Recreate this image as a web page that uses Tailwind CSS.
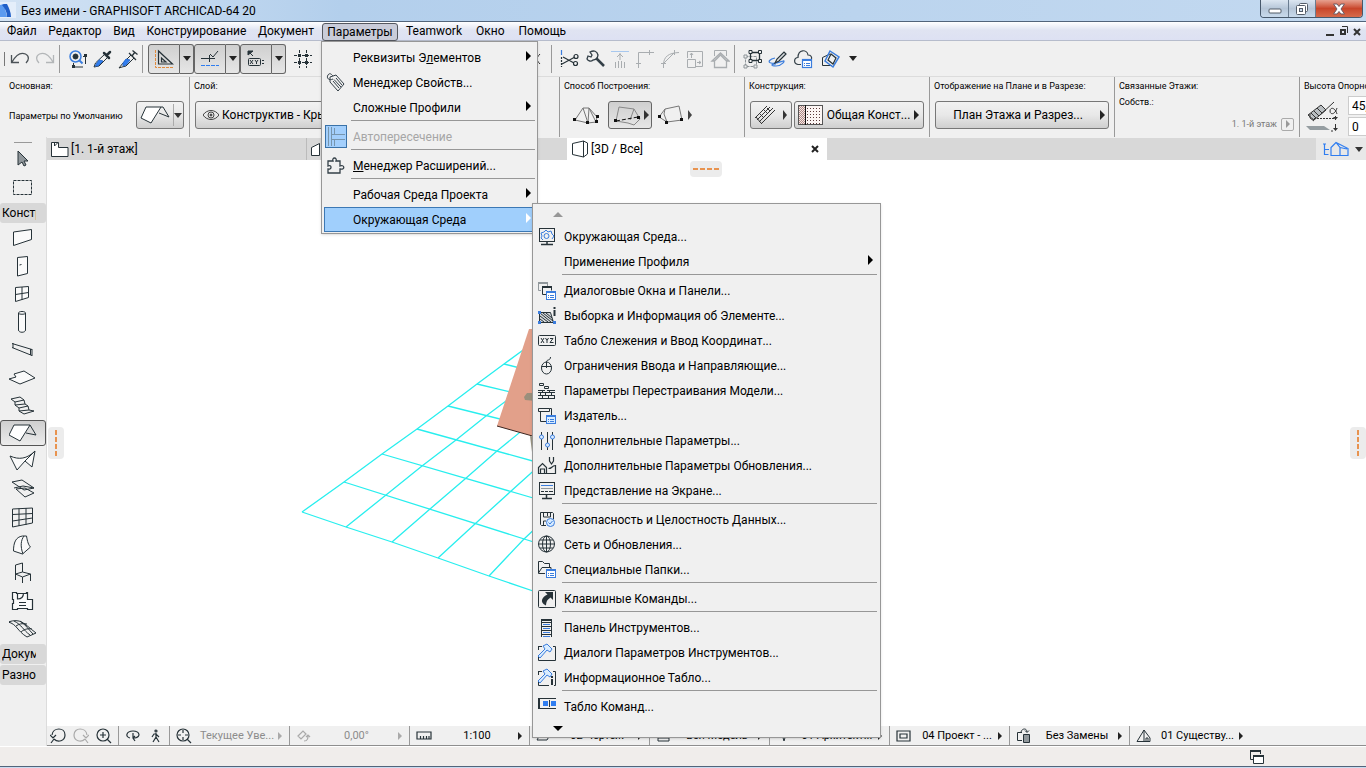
<!DOCTYPE html>
<html lang="ru">
<head>
<meta charset="utf-8">
<title>Без имени - GRAPHISOFT ARCHICAD-64 20</title>
<script src="https://cdn.jsdelivr.net/npm/@tailwindcss/browser@4"></script>
</head>
<body class="flex h-screen min-h-[600px] flex-col overflow-hidden bg-[#f0f0f0] font-['Roboto','Open_Sans',sans-serif] text-xs text-black">

<!-- Title bar -->
<header class="flex h-[22px] shrink-0 items-start border-b border-[#52647a] bg-linear-to-r from-[#d3e3f4] via-[#b3cfec] via-25% to-[#c3d9f0]">
  <svg width="16" height="18" viewBox="0 0 16 18" class="mt-[2px] shrink-0"><rect width="16" height="16" fill="#e4eefa"/><path d="M0 3l4-1 3 13H0z" fill="#5b9bf0"/><path d="M4 2h3c2 4 4 8 4 13H7C7 10 5 6 2 3z" fill="#1f5fc8"/></svg>
  <h1 class="ml-[5px] text-xs leading-[22px] whitespace-nowrap">Без имени - GRAPHISOFT ARCHICAD-64 20</h1>
  <div class="mr-[3px] ml-auto flex h-[18px] overflow-hidden rounded-b border border-t-0 border-[#47586b]">
    <button aria-label="Свернуть" class="flex w-7 items-center justify-center border-r border-[#6a7c90] bg-linear-to-b from-[#dce6f1] via-[#b6c6d8] to-[#c8daec]"><svg width="14" height="6" viewBox="0 0 14 6" class="mt-1"><rect x="1" y="1" width="12" height="4" rx="1" fill="#fff" stroke="#535c68"/></svg></button>
    <button aria-label="Восстановить" class="flex w-[27px] items-center justify-center border-r border-[#6a7c90] bg-linear-to-b from-[#dce6f1] via-[#b6c6d8] to-[#c8daec]"><svg width="14" height="14" viewBox="0 0 14 14" fill="#fff" stroke="#535c68"><rect x="4.500" y="1.500" width="8" height="8" rx="1"/><rect x="1.500" y="3.500" width="9" height="9" rx="1"/><rect x="4.500" y="6.500" width="3" height="3" fill="#c8daec"/></svg></button>
    <button aria-label="Закрыть" class="flex w-[46px] items-center justify-center bg-linear-to-b from-[#e6a08f] via-[#c8452a] to-[#d66a4a]"><svg width="14" height="12" viewBox="0 0 14 12"><path d="M1.500 1h3.500l2 2.500L9 1h3.500L9 6l3.500 5H9L7 8.500 5 11H1.500L5 6z" fill="#fff" stroke="#6d5a62"/></svg></button>
  </div>
</header>

<!-- Menu bar -->
<nav class="relative z-20 flex h-[19px] shrink-0 items-center border-b border-[#b6bccc] bg-linear-to-b from-white via-[#e0e4f2] via-45% to-[#dde1f3] leading-5 whitespace-nowrap">
  <div class="flex w-[322px] shrink-0 justify-between pr-2 pl-[7px]">
    <button>Файл</button>
    <button>Редактор</button>
    <button>Вид</button>
    <button>Конструирование</button>
    <button>Документ</button>
  </div>
  <div class="relative h-[18px] w-[76px] shrink-0">
    <button class="h-[18px] w-full rounded-[3px] border border-[#55585f] bg-[#c9ccd9] leading-[17px]" aria-expanded="true">Параметры</button>

    <!-- Options menu -->
    <div class="absolute top-[19px] -left-px w-[217px] border border-[#979797] bg-[#f0f0f0] px-[2px] pt-[3px] pb-px shadow-sm" role="menu">
      <button role="menuitem" class="flex h-[25px] w-full items-center pr-1"><span class="w-[29px]"></span>Реквизиты Э<u>л</u>ементов<svg width="5" height="10" viewBox="0 0 5 10" class="mb-1 ml-auto"><path d="M0 0l5 5-5 5z"/></svg></button>
      <button role="menuitem" class="flex h-[25px] w-full items-center"><span class="w-[29px]"><svg width="22" height="22" viewBox="0 0 22 22" class="ml-[2px]" fill="none" stroke="#333f47"><path d="M4 5l6-2 8 9-6 7-8-9zM7 9l6 7M8 7.500l7 7.500M10 6l6 7"/><path d="M7 7C3 9 0 6 2 3s4 0 5 1"/></svg></span>Менеджер Свойств...</button>
      <button role="menuitem" class="flex h-[25px] w-full items-center pr-1"><span class="w-[29px]"></span>Сложные Профили<svg width="5" height="10" viewBox="0 0 5 10" class="mb-1 ml-auto"><path d="M0 0l5 5-5 5z"/></svg></button>
      <hr class="mb-[3px] ml-[27px] border-[#979797]">
      <button role="menuitem" disabled class="flex h-[25px] w-full items-center text-[#a6a6a6]"><span class="w-[29px]"><svg width="22" height="23" viewBox="0 0 22 23" class="ml-px"><rect x=".5" y=".5" width="21" height="22" fill="#a3cffc" stroke="#3a72a8"/><path d="M3.500 2v19M6.500 2v19M6.500 9.500H20M6.500 14.500H20M9.500 3v6M9.500 15v6" fill="none" stroke="#7795ad"/></svg></span>Автопересечение</button>
      <hr class="mb-[3px] ml-[27px] border-[#979797]">
      <button role="menuitem" class="flex h-[25px] w-full items-center"><span class="w-[29px]"><svg width="20" height="20" viewBox="0 0 20 20" class="ml-[2px]" fill="none" stroke="#333f47" stroke-width="1.300"><path d="M2 5h5c-1.500-4 4.500-4 3 0h4v5c4-2 6 4 0 3v4H2v-4c4 1 4-5 0-3z"/></svg></span><u>М</u>енеджер Расширений...</button>
      <hr class="mb-[3px] ml-[27px] border-[#979797]">
      <button role="menuitem" class="flex h-[25px] w-full items-center pr-1"><span class="w-[29px]"></span>Рабочая Среда Проекта<svg width="5" height="10" viewBox="0 0 5 10" class="mb-1 ml-auto"><path d="M0 0l5 5-5 5z"/></svg></button>
      <button role="menuitem" aria-expanded="true" class="flex h-[25px] w-full items-center border border-[#3c78b4] bg-[#a0cffc] pr-[3px]"><span class="w-7"></span>Окружающая Среда<svg width="5" height="10" viewBox="0 0 5 10" class="mb-1 ml-auto"><path d="M0 0l5 5-5 5z" fill="#fff"/></svg></button>
    </div>

    <!-- Work Environment submenu -->
    <div class="absolute top-[181px] left-[210px] w-[349px] border border-[#979797] bg-[#f0f0f0] px-[3px] shadow-sm" role="menu">
      <div class="flex h-5 items-center pl-[17px]"><svg width="10" height="5" viewBox="0 0 10 5"><path d="M0 5l5-5 5 5z" fill="#979797"/></svg></div>
      <button role="menuitem" class="flex h-[25px] w-full items-center gap-[7px] pl-px"><svg width="20" height="20" viewBox="0 0 20 20" fill="none" stroke="#263238"><rect x="2.500" y="1.500" width="15" height="13"/><path d="M10 15v3M4 17.500h12" stroke-width="1.500"/><g stroke="#3b7ddd"><circle cx="9.500" cy="9" r="2.500"/><path d="M6 13l-2-2 1-2-1-3 3-1 2-2 2 2 3-1 1 3 2 2-2 3"/></g></svg>Окружающая Среда...</button>
      <button role="menuitem" class="flex h-[25px] w-full items-center gap-[7px] pr-1 pl-px"><span class="w-5"></span>Применение Профиля<svg width="5" height="10" viewBox="0 0 5 10" class="mb-1 ml-auto"><path d="M0 0l5 5-5 5z"/></svg></button>
      <hr class="mb-[3px] ml-[26px] border-[#979797]">
      <button role="menuitem" class="flex h-[25px] w-full items-center gap-[7px] pl-px"><svg width="20" height="20" viewBox="0 0 20 20" fill="none" stroke="#263238"><path d="M4 9.500H1.500v-7h9v3" stroke="#90979b"/><path d="M1 2h10" stroke="#90979b" stroke-width="2"/><path d="M9 13.500H5.500v-8h9v4"/><path d="M5 6h10" stroke-width="2"/><rect x="9.500" y="10.500" width="9" height="8" stroke="#3b7ddd" fill="#fff"/><path d="M9 11.500h10M11 14.500h1M13 14.500h4M11 16.500h1M13 16.500h4" stroke="#3b7ddd"/></svg>Диалоговые Окна и Панели...</button>
      <button role="menuitem" class="flex h-[25px] w-full items-center gap-[7px] pl-px"><svg width="20" height="20" viewBox="0 0 20 20" fill="none" stroke="#263238"><path d="M2.500 6.500h11l3 10h-14z" fill="#d5d8da"/><path d="M3 13l4 3M3 10l8 6M3 7l11 9M6 7l10 8M9 7l6 5"/><path d="M17.500 1v2M17.500 4v6" stroke-width="2"/><g fill="#3b7ddd" stroke="none"><path d="M1 5h3v3H1zM1 15h3v3H1zM16 15h3v3h-3z"/></g></svg>Выборка и Информация об Элементе...</button>
      <button role="menuitem" class="flex h-[25px] w-full items-center gap-[7px] pl-px"><svg width="20" height="20" viewBox="0 0 20 20" fill="none" stroke="#263238"><rect x="1.500" y="4.500" width="17" height="10" rx="1"/><path d="M4 7l3 5M7 7l-3 5M8.500 7L10 9.500 11.500 7M10 9.500V12M13 7.500h3l-3 4h3.500"/></svg>Табло Слежения и Ввод Координат...</button>
      <button role="menuitem" class="flex h-[25px] w-full items-center gap-[7px] pl-px"><svg width="20" height="20" viewBox="0 0 20 20" fill="none" stroke="#263238"><ellipse cx="9.500" cy="12" rx="5" ry="6"/><path d="M4.500 10.500h10M9.500 12V6c0-3 4-1 4-5"/></svg>Ограничения Ввода и Направляющие...</button>
      <button role="menuitem" class="flex h-[25px] w-full items-center gap-[7px] pl-px"><svg width="20" height="20" viewBox="0 0 20 20" fill="none" stroke="#263238"><path d="M2.500 2.500h4v2h-4zM7.500 5.500h4v2h-4zM1 9.500h7M10 9.500h8M1 11.500h17M1 14.500h17M1 17.500h17M5.500 9v2M12.500 9v2M3.500 12v2M8.500 12v2M14.500 12v2M5.500 15v2M11.500 15v2M17.500 15v2"/></svg>Параметры Перестраивания Модели...</button>
      <button role="menuitem" class="flex h-[25px] w-full items-center gap-[7px] pl-px"><svg width="20" height="20" viewBox="0 0 20 20" fill="none" stroke="#263238"><path d="M1.500 5.500v-3h11v3zM3.500 6v9.500H9M12.500 2.500h2v7"/><rect x="9.500" y="9.500" width="9" height="8" stroke="#3b7ddd" fill="#d8ecff"/><path d="M9 10.500h10M11 13.500h1M13 13.500h4M11 15.500h1M13 15.500h4" stroke="#3b7ddd"/></svg>Издатель...</button>
      <button role="menuitem" class="flex h-[25px] w-full items-center gap-[7px] pl-px"><svg width="20" height="20" viewBox="0 0 20 20" fill="none" stroke="#263238"><path d="M4.500 1v3M4.500 8v11M10.500 1v11M10.500 16v3M15.500 1v3M15.500 8v11"/><g stroke="#3b7ddd" fill="#d8ecff"><circle cx="4.500" cy="6" r="2"/><circle cx="10.500" cy="14" r="2"/><circle cx="15.500" cy="6" r="2"/></g></svg>Дополнительные Параметры...</button>
      <button role="menuitem" class="flex h-[25px] w-full items-center gap-[7px] pl-px"><svg width="20" height="20" viewBox="0 0 20 20" fill="none" stroke="#263238" stroke-width="1.200"><path d="M10 17.500h8.500v-8c-2 0-3 1-4 2s-2 1-3 1M1.500 17.500v-6l4-4 4 4v6zM3.500 17v-4h4v4M12.500 1v4l2 3 2-3V1"/></svg>Дополнительные Параметры Обновления...</button>
      <button role="menuitem" class="flex h-[25px] w-full items-center gap-[7px] pl-px"><svg width="20" height="20" viewBox="0 0 20 20" fill="none" stroke="#263238"><rect x="2.500" y="1.500" width="15" height="12"/><path d="M9.500 14v4M5 17.500h10" stroke-width="1.500"/><path d="M4 4.500h12" stroke="#3b7ddd"/><path d="M4 7.500h12" stroke="#90979b"/><path d="M4 10.500h3M8 10.500h3M12 10.500h4"/></svg>Представление на Экране...</button>
      <hr class="mb-[3px] ml-[26px] border-[#979797]">
      <button role="menuitem" class="flex h-[25px] w-full items-center gap-[7px] pl-px"><svg width="20" height="20" viewBox="0 0 20 20" fill="none" stroke="#263238"><path d="M9 15.500H4.500l-1-1v-12h12l1 1V9M6.500 3v4h7V3M10.500 3v3M6.500 15v-4H9"/><circle cx="13.500" cy="12.500" r="4" stroke="#3b7ddd" fill="#d8ecff"/><path d="M11.500 12.500l1.500 1.500 2.500-3" stroke="#3b7ddd"/></svg>Безопасность и Целостность Данных...</button>
      <button role="menuitem" class="flex h-[25px] w-full items-center gap-[7px] pl-px"><svg width="20" height="20" viewBox="0 0 20 20" fill="none" stroke="#263238"><circle cx="9.500" cy="9" r="8"/><ellipse cx="9.500" cy="9" rx="4" ry="8"/><path d="M9.500 1v16M1.500 9h16M3 5h13M3 13h13"/></svg>Сеть и Обновления...</button>
      <button role="menuitem" class="flex h-[25px] w-full items-center gap-[7px] pl-px"><svg width="20" height="20" viewBox="0 0 20 20" fill="none" stroke="#263238"><path d="M8 13.500H1.500v-12h4l2 2h5v4M1.500 13L5 7.500h9v2"/><rect x="9.500" y="9.500" width="9" height="8" stroke="#3b7ddd" fill="#fff"/><path d="M9 10.500h10M11 13.500h1M13 13.500h4M11 15.500h1M13 15.500h4" stroke="#3b7ddd"/></svg>Специальные Папки...</button>
      <hr class="mb-[3px] ml-[26px] border-[#979797]">
      <button role="menuitem" class="flex h-[25px] w-full items-center gap-[7px] pl-px"><svg width="20" height="20" viewBox="0 0 20 20" fill="none" stroke="#263238"><rect x="1.500" y="1.500" width="17" height="17" rx="1"/><path d="M8 3h8v8l-2.500-2.500C10 11 9.500 12 9 16.500 2 13 5 8 10.500 5.500z" fill="#263238" stroke="none"/></svg>Клавишные Команды...</button>
      <hr class="mb-[3px] ml-[26px] border-[#979797]">
      <button role="menuitem" class="flex h-[25px] w-full items-center gap-[7px] pl-px"><svg width="20" height="20" viewBox="0 0 20 20" fill="none" stroke="#263238"><path d="M4.500 19V1M14.500 19V1"/><path d="M4 2h11" stroke-width="2"/><path d="M5 4.500h9M5 8.500h9M5 12.500h9M5 16.500h9"/><path d="M6 6.500h7M6 10.500h7M6 14.500h7M6 18.500h7" stroke="#3b7ddd"/></svg>Панель Инструментов...</button>
      <button role="menuitem" class="flex h-[25px] w-full items-center gap-[7px] pl-px"><svg width="20" height="20" viewBox="0 0 20 20" fill="none" stroke="#263238"><path d="M1.500 4v3M1.500 14v3.500h17V3.500H16M1 3.500h4"/><path d="M3 15l-2-2 7-7-2-3 4-2 5 5-2 3-3-2z" fill="#d8ecff" stroke="#3b7ddd"/></svg>Диалоги Параметров Инструментов...</button>
      <button role="menuitem" class="flex h-[25px] w-full items-center gap-[7px] pl-px"><svg width="20" height="20" viewBox="0 0 20 20" fill="none" stroke="#263238"><path d="M1.500 4v3M1.500 14v3.500H12M17 17.500h1.500V3.500H16M1 3.500h4"/><path d="M3 15l-2-2 7-7-2-3 4-2 5 5-2 3-3-2z" fill="#d8ecff" stroke="#3b7ddd"/><path d="M15 8v2M15 11v6" stroke-width="2"/></svg>Информационное Табло...</button>
      <hr class="mb-[3px] ml-[26px] border-[#979797]">
      <button role="menuitem" class="flex h-[25px] w-full items-center gap-[7px] pl-px"><svg width="20" height="20" viewBox="0 0 20 20" fill="none" stroke="#263238"><path d="M1 1.500h18M1 11.500h18"/><path d="M2 1v11" stroke-width="2"/><path d="M6 4h5v5H6zM14 4h5v5h-5z" fill="#2f7df0" stroke="none"/><path d="M12.500 3v7"/></svg>Табло Команд...</button>
      <div class="flex h-[18px] items-center pl-[17px]"><svg width="10" height="5" viewBox="0 0 10 5"><path d="M0 0h10L5 5z"/></svg></div>
    </div>
  </div>
  <div class="flex gap-[14px] pl-2">
    <button>Teamwork</button>
    <button>Окно</button>
    <button>Помощь</button>
  </div>
  <svg width="36" height="12" viewBox="0 0 36 12" class="mr-[4px] ml-auto" fill="none" stroke="#333" stroke-width="2"><path d="M0 10h8M15 5h4v4h-4z"/><path d="M16 1.500h5.500V8" stroke-width="1"/><path d="M28 4l6 6M34 4l-6 6"/></svg>
</nav>

<!-- Main toolbar -->
<div class="flex h-9 shrink-0 items-center border-b border-[#dcdcdc]" role="toolbar">
  <div class="ml-1 h-[14px] w-[3px] border-l border-[#777]"></div>
  <button aria-label="Отменить" class="flex w-[25px] justify-center"><svg width="20" height="20" viewBox="0 0 20 20" fill="none" stroke="#4b5257" stroke-width="1.300"><path d="M1.500 6v7.500H9M2 13C6 6 11 3 15.500 5c4 2 3.500 6 .5 9"/></svg></button>
  <button aria-label="Повторить" class="flex w-[25px] justify-center"><svg width="20" height="20" viewBox="0 0 20 20" fill="none" stroke="#b3b6b8" stroke-width="1.300"><path d="M18.500 6v7.500H11M18 13C14 6 9 3 4.500 5c-4 2-3.500 6-.5 9"/></svg></button>
  <div class="mr-[5px] ml-[2px] h-7 border-l border-[#999]"></div>
  <button aria-label="Найти и выбрать" class="flex w-[25px] justify-center"><svg width="20" height="20" viewBox="0 0 20 20" fill="none" stroke="#263238"><circle cx="7.500" cy="7.500" r="5.500" stroke="#3b7ddd" stroke-width="1.500"/><circle cx="7.500" cy="7.500" r="2.500" fill="#263238"/><path d="M11.500 11.500l3 3" stroke="#3b7ddd" stroke-width="2"/><path d="M17.500 15V7M15 7.500h3M5.500 14v4H15M4 18h3"/><path d="M16 5h3v3h-3zM4 16h3v3H4z" fill="#263238" stroke="none"/></svg></button>
  <button aria-label="Взять параметры" class="flex w-[25px] justify-center"><svg width="20" height="20" viewBox="0 0 20 20" fill="none" stroke="#263238"><path d="M1 18l1.500-4L12 5l3 3-9 9z"/><path d="M2 17l4-6 4 1-5 5z" fill="#2f7df0" stroke="#2f6fd0"/><path d="M11 4l5 5M14 6l3-3" stroke-width="2.500" stroke-linecap="round"/></svg></button>
  <button aria-label="Передать параметры" class="flex w-[25px] justify-center"><svg width="20" height="20" viewBox="0 0 20 20" fill="none" stroke="#263238"><path d="M1 19l4-5 8-8 3 3-8 8-4 1z"/><path d="M5 14l3-4 4 1-4 5-3 1z" fill="#2f7df0" stroke="#2f6fd0"/><path d="M11 4l7 7M14 7l3-4M14.500 1.500l5 4" stroke-width="1.300"/></svg></button>
  <div class="mr-[5px] ml-[2px] h-7 border-l border-[#999]"></div>
  <div class="flex h-[30px]">
    <button aria-label="Направляющие" class="flex w-8 items-center justify-center rounded-l-[3px] border border-[#666] bg-linear-to-b from-[#cfcfcf] to-[#e6e6e6]"><svg width="20" height="20" viewBox="0 0 20 20" fill="none" stroke="#263238"><path d="M4.500 2v13h14zM7.500 9v4H12z" stroke-width="1.200"/><path d="M1.500 1v17.500H19" stroke="#e08a3c" stroke-dasharray="3 1"/></svg></button>
    <button aria-label="Параметры направляющих" class="flex w-[14px] items-center justify-center rounded-r-[3px] border border-l-0 border-[#666] bg-linear-to-b from-[#cfcfcf] to-[#e6e6e6]"><svg width="8" height="5" viewBox="0 0 8 5"><path d="M0 0h8L4 5z" fill="#222"/></svg></button>
    <button aria-label="Привязка" class="flex w-8 items-center justify-center rounded-l-[3px] border border-[#666] bg-linear-to-b from-[#cfcfcf] to-[#e6e6e6]"><svg width="20" height="20" viewBox="0 0 20 20" fill="none" stroke="#263238"><path d="M1 9.500h14M9.500 6v7M10 5l3 3 5-6"/><path d="M1 16.500h18" stroke="#2f7df0" stroke-dasharray="4 1"/></svg></button>
    <button aria-label="Параметры привязки" class="flex w-[14px] items-center justify-center rounded-r-[3px] border border-l-0 border-[#666] bg-linear-to-b from-[#cfcfcf] to-[#e6e6e6]"><svg width="8" height="5" viewBox="0 0 8 5"><path d="M0 0h8L4 5z" fill="#222"/></svg></button>
    <button aria-label="Табло слежения" class="flex w-8 items-center justify-center rounded-l-[3px] border border-[#666] bg-linear-to-b from-[#cfcfcf] to-[#e6e6e6]"><svg width="20" height="20" viewBox="0 0 20 20" fill="none" stroke="#263238"><path d="M2 2h5L2 6z" fill="#263238"/><path d="M4 4l3 3"/><rect x="2.500" y="9.500" width="12" height="7" rx="1"/><path d="M4 11l3 4M7 11l-3 4M9 11l1.500 2L12 11M10.500 13v2M16 11.500h2M16 14.500h2"/></svg></button>
    <button aria-label="Параметры табло слежения" class="flex w-[14px] items-center justify-center rounded-r-[3px] border border-l-0 border-[#666] bg-linear-to-b from-[#cfcfcf] to-[#e6e6e6]"><svg width="8" height="5" viewBox="0 0 8 5"><path d="M0 0h8L4 5z" fill="#222"/></svg></button>
  </div>
  <button aria-label="Сетка" class="ml-1 flex w-[25px] justify-center"><svg width="20" height="20" viewBox="0 0 20 20" fill="none" stroke="#263238"><path d="M6.500 1v18M13.500 1v18M1 6.500h18M1 13.500h18" stroke-dasharray="3 1"/><path d="M5 5h3v3H5zM12 5h3v3h-3zM5 12h3v3H5zM12 12h3v3h-3z" fill="#263238" stroke="none"/></svg></button>
  <div class="ml-[221px] w-[15px]"><svg width="8" height="14" viewBox="0 0 8 14" fill="none" stroke="#333"><path d="M4 2C2 4 1 6 1 7s1 3 3 5"/></svg></div>
  <div class="mr-[5px] h-7 border-l border-[#999]"></div>
  <button aria-label="Разрезать" class="flex w-[25px] justify-center"><svg width="20" height="20" viewBox="0 0 20 20" fill="none" stroke="#263238" stroke-width="1.200"><path d="M1.500 1v5" stroke="#3b7ddd"/><path d="M1.500 8v10" stroke-dasharray="2 1"/><path d="M3 8l11 6M2 15l13-7"/><circle cx="16" cy="7.500" r="2"/><circle cx="15.500" cy="14.500" r="2"/></svg></button>
  <button aria-label="Подогнать" class="flex w-[25px] justify-center"><svg width="20" height="20" viewBox="0 0 20 20" fill="none" stroke="#333f47" stroke-width="1.300"><path d="M5 3c4-2 7-1 8 3l-1 4-4 1c-2 2-5 1-6-1l1-3 3 1 1-2z"/><path d="M11 9l8 8" stroke-width="2.500"/></svg></button>
  <button aria-label="Выдавить" class="flex w-[25px] justify-center"><svg width="20" height="20" viewBox="0 0 20 20" fill="none" stroke="#a9adb0"><path d="M1 2.500h18" stroke="#a8c8ee"/><path d="M10 11V4M7 8l3-3 3 3M5.500 13v6M8.500 12v7M11.500 12v7M14.500 13v6"/></svg></button>
  <button aria-label="Пересечь" class="flex w-[25px] justify-center"><svg width="20" height="20" viewBox="0 0 20 20" fill="none" stroke="#a9adb0"><path d="M3.500 19V3.500H19M1 14.500h5M14.500 1v5"/></svg></button>
  <button aria-label="Скруглить" class="flex w-[25px] justify-center"><svg width="20" height="20" viewBox="0 0 20 20" fill="none" stroke="#a9adb0"><path d="M3.500 19v-4C4 8 8 4 19 3.500M1 14.500h5M14.500 1v5M4 14L14 4"/></svg></button>
  <button aria-label="Изменить размер" class="flex w-[25px] justify-center"><svg width="20" height="20" viewBox="0 0 20 20" fill="none" stroke="#a9adb0"><path d="M2.500 9V2.500h15v15H11M2.500 10.500h8v8h-8zM6.500 9V4M5 6l1.500-2L8 6M12 13.500h4M14 12l2 1.500-2 1.500"/></svg></button>
  <button aria-label="Крыша" class="flex w-[25px] justify-center"><svg width="20" height="20" viewBox="0 0 20 20" fill="none" stroke="#a9adb0"><path d="M4.500 7V1.500h12V7"/><path d="M4.500 11v7.500h12V11M2 12l8.500-8L19 12h-2.500l-6-6-6 6z" stroke-width="1.300"/></svg></button>
  <div class="mr-[5px] ml-[2px] h-7 border-l border-[#999]"></div>
  <button aria-label="Группировать" class="flex w-[25px] justify-center"><svg width="20" height="20" viewBox="0 0 20 20" fill="none" stroke="#263238"><path d="M2.500 7.500h11v10h-11z" stroke="#8d9498" stroke-dasharray="3 1"/><path d="M1 6h3v3H1zM1 16h3v3H1zM11 16h3v3h-3z" stroke="#8d9498" fill="#f0f0f0"/><path d="M7.500 3.500h9v8h-9z" stroke-width="1.300"/><path d="M6 1.500h3v3H6zM15.500 1.500h3v3h-3zM6 10.500h3v3H6zM15.500 10.500h3v3h-3z" fill="#f0f0f0"/></svg></button>
  <button aria-label="Редактировать" class="flex w-[25px] justify-center"><svg width="20" height="20" viewBox="0 0 20 20" fill="none" stroke="#3b7ddd" stroke-width="1.200"><path d="M7 9c-5 1-8 4-4 5s9-1 12-2-1 5-7 5-5-2 0-2"/><path d="M7 14l2-4 7-7 2 2-7 7z" stroke="#263238" fill="#d9dcde"/></svg></button>
  <button aria-label="BIMcloud" class="flex w-[25px] justify-center"><svg width="20" height="20" viewBox="0 0 20 20" fill="none" stroke="#333f47" stroke-width="1.200"><path d="M8 15.500H5c-5-1-4-7 0-7C5 0 14 0 15 6c3 0 4 2 3.500 4"/><rect x="9.500" y="10.500" width="9" height="8" stroke="#3b7ddd" fill="#fff"/><path d="M9 11.500h10M11 14.500h1M13 14.500h4M11 16.500h1M13 16.500h4" stroke="#3b7ddd"/></svg></button>
  <button aria-label="Показать выбранное в 3D" class="ml-[3px] flex w-[25px] justify-center"><svg width="20" height="20" viewBox="0 0 20 20" fill="none" stroke="#263238"><path d="M1.500 16.500v-8L9 5M1.500 16.500H11"/><path d="M9 2l9 6-6 10-8-6z" stroke="#3b7ddd" stroke-width="1.500"/><path d="M10 5l5 4-3 6-5-4z" stroke-width="1.200"/></svg></button>
  <button aria-label="Ещё" class="ml-[6px]"><svg width="8" height="5" viewBox="0 0 8 5"><path d="M0 0h8L4 5z" fill="#222"/></svg></button>
</div>

<!-- Info box -->
<section class="flex h-[60px] shrink-0 overflow-hidden text-[9px] whitespace-nowrap">
  <div class="flex w-[189px] shrink-0 flex-col pt-[2px] pl-[9px]">
    <h2 class="leading-[14px]">Основная:</h2>
    <div class="mt-2 flex items-center justify-between pr-[5px]"><span class="pt-px">Параметры по Умолчанию</span>
      <button aria-label="Крыша" class="flex h-7 w-12 shrink-0 items-center justify-center rounded-[3px] border border-[#777] bg-linear-to-b from-[#f2f2f2] via-[#e8e8e8] to-[#cfcfcf]"><svg width="46" height="26" viewBox="0 0 46 26" fill="none" stroke="#263238"><path d="M9 5h15L14 21 4 16z" fill="#fff"/><path d="M24 5h2l6 10-10-4"/><path d="M36.500 2v22" stroke="#aaa"/><path d="M37 11h8l-4 5z" fill="#333" stroke="none"/></svg></button>
    </div>
  </div>
  <div class="w-[185px] shrink-0 border-l border-[#999] pt-[2px] pl-1">
    <h2 class="leading-[14px]">Слой:</h2>
    <button class="mt-2 ml-px flex h-7 w-[174px] items-center gap-[3px] rounded-[3px] border border-[#777] bg-linear-to-b from-[#f2f2f2] via-[#e8e8e8] to-[#cfcfcf] pl-[7px] text-xs"><svg width="16" height="12" viewBox="0 0 16 12" class="shrink-0" fill="none" stroke="#444"><path d="M0 6c4-6 12-6 16 0-4 6-12 6-16 0z"/><circle cx="8" cy="6" r="3"/><circle cx="8" cy="6" r="1" fill="#444"/></svg>Конструктив - Крыши</button>
  </div>
  <div class="w-[185px] shrink-0 border-l border-[#999]"></div>
  <div class="w-[185px] shrink-0 border-l border-[#999] pt-[2px] pl-1">
    <h2 class="leading-[14px]">Способ Построения:</h2>
    <div class="mt-2 flex h-7 items-center">
      <button aria-label="Скатная" class="flex w-11 justify-center"><svg width="26" height="20" viewBox="0 0 26 20" fill="none" stroke="#777"><path d="M2 15L10 3h6l8 9-1 5-8 1zM10 3l5 15M16 3l-1 15M16 3l7 14"/><path d="M0 13h3v3H0zM13 16h3v3h-3zM22 15h3v3h-3zM23 10h3v3h-3z" fill="#111" stroke="none"/></svg></button>
      <button aria-label="Односкатная" class="flex h-7 w-11 items-center justify-center rounded-[3px] border border-[#666] bg-linear-to-b from-[#cfcfcf] to-[#e6e6e6]"><svg width="38" height="22" viewBox="0 0 38 22" fill="none" stroke="#888"><path d="M5 17L8 3l15 2 6 10-6 6-6-2zM23 5l-4 11"/><path d="M5 17l22-4" stroke="#111" stroke-dasharray="4 2"/><path d="M3 15h3v3H3zM26 12h3v3h-3z" fill="#111" stroke="none"/><path d="M33 6l5 5-5 5z" fill="#333" stroke="none"/></svg></button>
      <button aria-label="По поверхности" class="ml-[5px] flex w-9"><svg width="36" height="20" viewBox="0 0 36 20" fill="none" stroke="#777"><path d="M2 12L8 4l14-3 3 14-15 2zM8 4L7 9l3 8"/><path d="M1 10h3v3H1zM8 16h3v3H8zM23 13h3v3h-3z" fill="#111" stroke="none"/><path d="M31 5l4 5-4 5z" fill="#444" stroke="none"/></svg></button>
    </div>
  </div>
  <div class="w-[185px] shrink-0 border-l border-[#999] pt-[2px] pl-1">
    <h2 class="leading-[14px]">Конструкция:</h2>
    <div class="mt-2 flex gap-[2px] pl-px">
      <button aria-label="Тип конструкции" class="flex h-7 w-[42px] items-center justify-center rounded-[3px] border border-[#777] bg-linear-to-b from-[#f2f2f2] via-[#e8e8e8] to-[#cfcfcf]"><svg width="32" height="20" viewBox="0 0 32 20" fill="none" stroke="#333"><path d="M0 13L12 1M2 15L15 2M4 17L18 3M6 19L20 5M1 12l5 6M5 9l3 3M9 5l3 3M12 3l3 3"/><path d="M28 5l4 5-4 5z" fill="#333" stroke="none"/></svg></button>
      <button class="flex h-7 w-[130px] items-center justify-between rounded-[3px] border border-[#777] bg-linear-to-b from-[#f2f2f2] via-[#e8e8e8] to-[#cfcfcf] pr-1 pl-[3px] text-xs"><svg width="25" height="20" viewBox="0 0 25 20"><defs><pattern id="dots" width="3" height="3" patternUnits="userSpaceOnUse"><rect width="3" height="3" fill="#fdf6f4"/><path d="M0 0h1v1H0z" fill="#5b3a3a"/></pattern><pattern id="dense" width="2" height="2" patternUnits="userSpaceOnUse"><rect width="2" height="2" fill="#f5e9e6"/><path d="M0 0h1v1H0zM1 1h1v1H1z" fill="#b08a86"/></pattern></defs><rect x=".5" y=".5" width="24" height="19" fill="url(#dots)" stroke="#555"/><rect x="1" y="1" width="6" height="18" fill="url(#dense)"/><path d="M7.500 0v20" stroke="#111"/></svg>Общая Конст...<svg width="5" height="10" viewBox="0 0 5 10"><path d="M0 0l5 5-5 5z" fill="#222"/></svg></button>
    </div>
  </div>
  <div class="w-[185px] shrink-0 border-l border-[#999] pt-[2px] pl-1">
    <h2 class="leading-[14px]">Отображение на Плане и в Разрезе:</h2>
    <button class="mt-2 ml-px flex h-7 w-[174px] items-center justify-center rounded-[3px] border border-[#777] bg-linear-to-b from-[#f2f2f2] via-[#e8e8e8] to-[#cfcfcf] text-xs"><span class="flex-1">План Этажа и Разрез...</span><svg width="5" height="10" viewBox="0 0 5 10" class="mr-[3px]"><path d="M0 0l5 5-5 5z" fill="#222"/></svg></button>
  </div>
  <div class="w-[185px] shrink-0 border-l border-[#999] pt-[2px] pr-[5px] pl-1">
    <h2 class="leading-[14px]">Связанные Этажи:</h2>
    <p class="mt-[2px] leading-[14px]">Собств.:</p>
    <div class="mt-2 flex items-center justify-end gap-1 leading-[14px] text-[#777]">1. 1-й этаж<button aria-label="Выбрать этаж" class="flex h-[13px] w-[13px] items-center justify-center rounded-[2px] border border-[#aaa]"><svg width="4" height="8" viewBox="0 0 4 8"><path d="M0 0l4 4-4 4z" fill="#999"/></svg></button></div>
  </div>
  <div class="w-[185px] shrink-0 border-l border-[#999] pt-[2px] pl-1">
    <label for="pivot" class="block leading-[14px]">Высота Опорной Линии:</label>
    <div class="mt-[3px] flex gap-2">
      <svg width="34" height="36" viewBox="0 0 34 36" class="ml-[2px]" fill="none" stroke="#333"><path d="M2 19L15 9l5 5-12 10zM4 18v4l4 3M5 17l5 5M8 15l5 5M11 12l5 5" fill="#b9bec1"/><path d="M14 19L28 6"/><path d="M8 22.500h20" stroke-dasharray="2 1"/><path d="M31 12c-2 7-7 7-7 3s5-4 7 3M29.500 20v4"/><path d="M27 21h5l-2.500 3zM27 32h5l-2.500 3z" fill="#333" stroke="none"/><path d="M29.500 28v5M25 35h2"/><path d="M0 30h18l6 4H4z" fill="#959da1" stroke="none"/></svg>
      <div class="flex flex-col gap-[2px]">
        <input id="pivot" value="45,00°" class="h-[19px] w-20 border border-[#ccc] bg-white pl-[3px] text-xs">
        <input aria-label="Отметка" value="0" class="h-[19px] w-20 border border-[#ccc] bg-white pl-[3px] text-xs">
      </div>
    </div>
  </div>
</section>

<div class="flex min-h-0 flex-1">
  <!-- Toolbox -->
  <aside class="flex w-[47px] shrink-0 flex-col items-center border-r border-[#dcdcdc]">
    <div class="mt-[5px] mb-[3px] w-[18px] shrink-0 border-t border-[#999]"></div>
    <button aria-label="Указатель" class="flex h-7 w-full shrink-0 items-center justify-center"><svg width="28" height="24" viewBox="0 0 28 24" fill="none" stroke="#263238"><path d="M9 3v14l4-3 2 4 2-1-2-4h4z" fill="#90979b"/></svg></button>
    <button aria-label="Бегущая рамка" class="flex h-[29px] w-full shrink-0 items-center justify-center"><svg width="28" height="24" viewBox="0 0 28 24" fill="none" stroke="#263238"><rect x="4.500" y="3.500" width="18" height="14" stroke-dasharray="3 1"/></svg></button>
    <button class="h-5 w-full shrink-0 overflow-hidden rounded-[3px] bg-[#d8d8d8] pl-[2px] text-left"><span class="block w-[34px] overflow-hidden">Конструирование</span></button>
    <button aria-label="Стена" class="mt-px flex h-7 w-full shrink-0 items-center justify-center"><svg width="28" height="24" viewBox="0 0 28 24" fill="none" stroke="#263238"><path d="M4.500 6l18-2.500v10l-18 6z" fill="#fafafa"/></svg></button>
    <button aria-label="Дверь" class="flex h-7 w-full shrink-0 items-center justify-center"><svg width="28" height="24" viewBox="0 0 28 24" fill="none" stroke="#263238"><path d="M8.500 3.500l10-1v17l-10 2.500zM10.500 11l2-.5" fill="#fafafa"/></svg></button>
    <button aria-label="Окно" class="flex h-7 w-full shrink-0 items-center justify-center"><svg width="28" height="24" viewBox="0 0 28 24" fill="none" stroke="#263238"><path d="M6.500 5.500l13-1v11l-13 4zM13 5v13M6.500 12.500l13-2" fill="#fafafa"/></svg></button>
    <button aria-label="Колонна" class="flex h-7 w-full shrink-0 items-center justify-center"><svg width="28" height="24" viewBox="0 0 28 24" fill="none" stroke="#263238"><path d="M9.500 3v17c0 3 7 3 7 0V3c0-2-7-2-7 0z" fill="#fafafa"/><path d="M9.500 3.500c1 1 6 1 7 0"/></svg></button>
    <button aria-label="Балка" class="flex h-7 w-full shrink-0 items-center justify-center"><svg width="28" height="24" viewBox="0 0 28 24" fill="none" stroke="#263238"><path d="M3 5.500l20 6M3 9.500l20 8M4 5v5M23 11v7M21.500 11v6"/></svg></button>
    <button aria-label="Перекрытие" class="flex h-7 w-full shrink-0 items-center justify-center"><svg width="28" height="24" viewBox="0 0 28 24" fill="none" stroke="#263238"><path d="M0 13l7-2-2-3 10-3 11 7-15 6z" fill="#fafafa"/></svg></button>
    <button aria-label="Лестница" class="flex h-7 w-full shrink-0 items-center justify-center"><svg width="28" height="24" viewBox="0 0 28 24" fill="none" stroke="#263238"><path d="M2 5l9-2 4 3-9 2zM6 8v3l10-1-1-4M6 11l4 3 9-2-3-2M10 14v3l10-1-1-4M10 17l5 3 10-3-5-1"/></svg></button>
    <button aria-label="Крыша" class="flex h-[26px] w-full shrink-0 items-center justify-center rounded-[3px] border border-[#555] bg-linear-to-b from-[#cfcfcf] to-[#ececec]"><svg width="28" height="24" viewBox="0 0 28 24" fill="none" stroke="#263238"><path d="M5 4h16L11 20 0 14z" fill="#fff"/><path d="M21 4l6 10-10-2"/></svg></button>
    <button aria-label="Оболочка" class="mt-px flex h-7 w-full shrink-0 items-center justify-center"><svg width="28" height="24" viewBox="0 0 28 24" fill="none" stroke="#263238"><path d="M1 7c9 4 17 3 25-5l-3 16-7-6L8 21z" fill="#fafafa"/><path d="M16 12L26 2"/></svg></button>
    <button aria-label="Световой люк" class="flex h-7 w-full shrink-0 items-center justify-center"><svg width="28" height="24" viewBox="0 0 28 24" fill="none" stroke="#263238"><path d="M3 5l10-2 12 8-10 2zM5 11l9-2 11 2M7 12l9 8 9-4-9-5z"/></svg></button>
    <button aria-label="Навесная стена" class="flex h-7 w-full shrink-0 items-center justify-center"><svg width="28" height="24" viewBox="0 0 28 24" fill="none" stroke="#263238"><path d="M3.500 4l20-1v15l-20 4zM10 3.500V21M17 3v17M3.500 9.500l20-1M3.500 16l20-3"/></svg></button>
    <button aria-label="Морф" class="flex h-7 w-full shrink-0 items-center justify-center"><svg width="28" height="24" viewBox="0 0 28 24" fill="none" stroke="#263238"><path d="M4.500 18c0-8 2-14 9-15h4c1 6 2 9 4 11l-8 7z" fill="#fafafa"/><path d="M14 21c-3-8-2-14 1-18"/></svg></button>
    <button aria-label="Объект" class="flex h-7 w-full shrink-0 items-center justify-center"><svg width="28" height="24" viewBox="0 0 28 24" fill="none" stroke="#263238"><path d="M6.500 19V4l7-2v9M6.500 13l7-2 8 2-8 3zM13.500 16v6M21.500 13v7"/></svg></button>
    <button aria-label="Зона" class="flex h-7 w-full shrink-0 items-center justify-center"><svg width="28" height="24" viewBox="0 0 28 24" fill="none" stroke="#263238" stroke-width="1.200"><path d="M3.500 3.500h4v1h10v-1h1v7h5v10h-5v-1h-10v1h-5v-6h1v-4h-1z" fill="#fafafa"/><path d="M8.500 4v6c4 0 6-2 6-6M10 13.500h7M10 16.500h7"/></svg></button>
    <button aria-label="3D-сетка" class="flex h-7 w-full shrink-0 items-center justify-center"><svg width="28" height="24" viewBox="0 0 28 24" fill="none" stroke="#263238"><path d="M-1 5c13-4 15 1 28 11l-9 4C8 14 8 7-1 5zM5 4c8 4 9 9 16 14M11 4c6 4 9 9 13 13M7 9c3-2 6-3 11-2M12 15c2-2 6-4 11-3"/></svg></button>
    <button class="mt-px h-5 w-full shrink-0 overflow-hidden rounded-[3px] bg-[#d8d8d8] pl-[2px] text-left"><span class="block w-[34px] overflow-hidden">Документ</span></button>
    <button class="mt-px h-5 w-full shrink-0 overflow-hidden rounded-[3px] bg-[#d8d8d8] pl-[2px] text-left"><span class="block w-[34px] overflow-hidden">Разное</span></button>
  </aside>

  <div class="flex min-w-0 flex-1 flex-col">
    <!-- Tabs -->
    <div class="mt-px flex h-[22px] shrink-0 bg-[#d8d8d8]" role="tablist">
      <button role="tab" class="flex w-[260px] items-center gap-[2px] border-r border-[#bbb] pl-1"><svg width="18" height="16" viewBox="0 0 18 16" fill="#fff" stroke="#263238"><path d="M.5 1.500h7v5h9.500v9H.5z"/><path d="M3.500 2v3l3-3" fill="none"/></svg>[1. 1-й этаж]</button>
      <button role="tab" class="flex w-[260px] items-center pl-1" aria-label="План"><svg width="18" height="16" viewBox="0 0 18 16" fill="#fff" stroke="#263238"><path d="M.5 6.500l8-4v12h-8z"/></svg></button>
      <button role="tab" aria-selected="true" class="flex w-[260px] items-center gap-[3px] bg-white pr-2 pl-[5px]"><svg width="16" height="18" viewBox="0 0 16 18" fill="#fff" stroke="#263238"><path d="M.5 3.500l11-2.500v16L.5 14.500zM11.500 1l4 2v11l-4 3z"/></svg>[3D / Все]<svg width="8" height="8" viewBox="0 0 8 8" class="ml-auto" stroke="#222" stroke-width="2"><path d="M1 1l6 6M7 1L1 7"/></svg></button>
      <button aria-label="Навигатор" class="ml-auto flex w-[50px] items-center justify-end gap-[6px] bg-[#e8e8e8] pr-[3px]"><svg width="28" height="16" viewBox="0 0 28 16" fill="none" stroke="#2f7df0" stroke-width="1.200"><path d="M3.500 3v10.500h4M4 8.500h4M2 3h3M10 14.500v-8l5-5 12 6v7H10zM15 1.500l4 5v8M19 6.500l7 1.500"/></svg><svg width="8" height="5" viewBox="0 0 8 5"><path d="M0 0h8L4 5z" fill="#333"/></svg></button>
    </div>

    <!-- 3D view -->
    <main class="relative min-h-0 flex-1 overflow-hidden bg-white">
      <svg width="880" height="566" viewBox="47 160 880 566" class="absolute top-0 left-0" fill="none">
        <g stroke="#28eeee" stroke-width="1.300">
          <path d="M302 512L344 482 382 454 417 429 448 406 477 384 504 364 530 345M302 512l44 15 46 15 46 16 51 18 50 17"/>
          <path d="M344 482l196 62M382 454l158 46M417 429l123 34M448 406l92 23M477 384l63 15M504 364l36 9"/>
          <path d="M346 527l40-32 36-29 34-26 30-24 40-30M392 542l38-33 35-30 32-28 38-31M438 558l38-35 34-31 30-27M489 576l35-37 16-15"/>
        </g>
        <path d="M529 329h60v123l-92-26z" fill="#e2a08a"/>
        <path d="M497 426l92 26" stroke="#3b2520"/>
        <path d="M524 397l3-4h20v9l-22-2z" fill="#9a8f7c"/>
        <path d="M530 436l2 16h8v-14z" fill="#9c9684"/>
      </svg>
      <div class="absolute top-px left-[643px] flex h-4 w-8 items-center justify-center rounded bg-[#ececec]"><svg width="26" height="2" viewBox="0 0 26 2"><path d="M0 1h26" stroke="#e8934f" stroke-width="2" stroke-dasharray="5 2"/></svg></div>
      <div class="absolute top-[267px] left-px flex h-8 w-4 items-center justify-center rounded bg-[#ececec]"><svg width="2" height="26" viewBox="0 0 2 26"><path d="M1 0v26" stroke="#e8934f" stroke-width="2" stroke-dasharray="5 2"/></svg></div>
      <div class="absolute top-[267px] right-0 flex h-8 w-4 items-center justify-center rounded bg-[#ececec]"><svg width="2" height="26" viewBox="0 0 2 26"><path d="M1 0v26" stroke="#e8934f" stroke-width="2" stroke-dasharray="5 2"/></svg></div>
    </main>

    <!-- Quick options -->
    <div class="flex h-5 shrink-0 items-center overflow-hidden border-b border-[#8e8e8e] text-[11px] leading-5 whitespace-nowrap">
      <div class="flex h-full w-[72px] shrink-0 items-center justify-between border-r border-[#999] pr-[6px] pl-[3px]">
        <button aria-label="Предыдущий масштаб"><svg width="16" height="16" viewBox="0 0 16 16" fill="none" stroke="#263238" stroke-width="1.200"><path d="M2 7c1-8 13-8 13 0 0 6-7 8-11 4M0 7l3 3 3-3M4 11l-3 4"/></svg></button>
        <button aria-label="Следующий масштаб"><svg width="16" height="16" viewBox="0 0 16 16" fill="none" stroke="#aaa" stroke-width="1.200"><path d="M14 7C13-1 1-1 1 7c0 6 7 8 11 4M16 7l-3 3-3-3M12 11l3 4"/></svg></button>
        <button aria-label="Увеличить"><svg width="16" height="16" viewBox="0 0 16 16" fill="none" stroke="#263238" stroke-width="1.200"><circle cx="7" cy="7" r="6"/><path d="M4 7h6M7 4v6M11 11l4 4"/></svg></button>
      </div>
      <div class="flex h-full w-[51px] shrink-0 items-center justify-between border-r border-[#999] pr-2 pl-[7px]">
        <button aria-label="Орбита"><svg width="14" height="14" viewBox="0 0 14 14" fill="none" stroke="#263238" stroke-width="1.200"><path d="M4 9C-1 8 0 2 7 2s8 6 2 7H7M9 7L7 9l2 3M7 4v5"/></svg></button>
        <button aria-label="Прогулка"><svg width="10" height="14" viewBox="0 0 10 14" fill="none" stroke="#263238" stroke-width="1.200"><circle cx="5" cy="2" r="1"/><path d="M5 4v4l-3 5M5 8l3 5M1 8l2-3h2l3 3"/></svg></button>
      </div>
      <button class="flex h-full w-[120px] shrink-0 items-center border-r border-[#999] pr-[7px] pl-[6px] text-[#8c8c8c]"><svg width="16" height="16" viewBox="0 0 16 16" fill="none" stroke="#263238" stroke-width="1.200"><circle cx="7" cy="7" r="6"/><path d="M7 2v3M7 9v3M2 7h3M9 7h3M11 11l4 4"/></svg><span class="flex-1 pl-1 text-center">Текущее Уве...</span><svg width="4" height="8" viewBox="0 0 4 8"><path d="M0 0l4 4-4 4z" fill="#aaa"/></svg></button>
      <button class="flex h-full w-[120px] shrink-0 items-center border-r border-[#999] pr-[7px] pl-[7px] text-[#8c8c8c]"><svg width="14" height="12" viewBox="0 0 14 12" fill="none" stroke="#aaa" stroke-width="1.200"><path d="M1 6l5-5 3 3-5 5zM7 11c4 0 4-3 4-6M9 7l2-2 2 2"/></svg><span class="flex-1 pl-1 text-center">0,00°</span><svg width="4" height="8" viewBox="0 0 4 8"><path d="M0 0l4 4-4 4z" fill="#aaa"/></svg></button>
      <button class="flex h-full w-[120px] shrink-0 items-center border-r border-[#999] pr-[7px] pl-[6px]"><svg width="16" height="9" viewBox="0 0 16 9" fill="none" stroke="#263238" stroke-width="1.200"><path d="M1 1h14v7H1zM4.500 8V5M7.500 8V5M10.500 8V5M13 8V5"/></svg><span class="flex-1 pl-1 text-center">1:100</span><svg width="4" height="8" viewBox="0 0 4 8"><path d="M0 0l4 4-4 4z" fill="#222"/></svg></button>
      <button class="flex h-full w-[120px] shrink-0 items-center border-r border-[#999] pr-[7px] pl-[6px]"><svg width="16" height="14" viewBox="0 0 16 14" fill="none" stroke="#263238"><path d="M1 11L5 4h10l-4 7z"/></svg><span class="flex-1 pl-1 text-center">02 Чертеж</span><svg width="4" height="8" viewBox="0 0 4 8"><path d="M0 0l4 4-4 4z" fill="#222"/></svg></button>
      <button class="flex h-full w-[120px] shrink-0 items-center border-r border-[#999] pr-[7px] pl-[6px]"><svg width="16" height="14" viewBox="0 0 16 14" fill="none" stroke="#263238"><path d="M2 2h11v10H2zM2 9h11"/></svg><span class="flex-1 pl-1 text-center">Вся Модель</span><svg width="4" height="8" viewBox="0 0 4 8"><path d="M0 0l4 4-4 4z" fill="#222"/></svg></button>
      <button class="flex h-full w-[120px] shrink-0 items-center border-r border-[#999] pr-[7px] pl-[6px]"><svg width="16" height="14" viewBox="0 0 16 14" fill="none" stroke="#263238"><path d="M5 2l3 10 3-10z"/></svg><span class="flex-1 pl-1 text-center">01 Архитект...</span><svg width="4" height="8" viewBox="0 0 4 8"><path d="M0 0l4 4-4 4z" fill="#222"/></svg></button>
      <button class="flex h-full w-[120px] shrink-0 items-center border-r border-[#999] pr-[7px] pl-[6px]"><svg width="16" height="12" viewBox="0 0 16 12" fill="none" stroke="#263238" stroke-width="1.200"><path d="M1 1h13v10H1zM4 4h7v4H4z"/></svg><span class="flex-1 pl-1 text-center">04 Проект - ...</span><svg width="4" height="8" viewBox="0 0 4 8"><path d="M0 0l4 4-4 4z" fill="#222"/></svg></button>
      <button class="flex h-full w-[120px] shrink-0 items-center border-r border-[#999] pr-[7px] pl-[6px]"><svg width="16" height="16" viewBox="0 0 16 16" fill="none" stroke="#263238"><path d="M6 12.500H1.500v-8H6M5 4c1-4 6-4 6 0M9 2.500l2 2 2-2"/><path d="M7.500 6.500h6v8h-6z" fill="#90979b"/></svg><span class="flex-1 pl-1 text-center">Без Замены</span><svg width="4" height="8" viewBox="0 0 4 8"><path d="M0 0l4 4-4 4z" fill="#222"/></svg></button>
      <button class="flex h-full w-[120px] shrink-0 items-center pr-[7px] pl-[6px]"><svg width="16" height="14" viewBox="0 0 16 14" fill="none" stroke="#263238"><path d="M1 12.500L8 1v11.500zM8 1l6 8v3.500H8M10 12V9h2v3"/></svg><span class="flex-1 pl-1 text-center">01 Существу...</span><svg width="4" height="8" viewBox="0 0 4 8"><path d="M0 0l4 4-4 4z" fill="#222"/></svg></button>
    </div>
  </div>
</div>

<!-- Status bar -->
<footer class="flex h-[22px] shrink-0 flex-col border-t border-white bg-[#f0edeb]">
  <div class="flex flex-1 items-center justify-end pr-[101px]"><svg width="16" height="16" viewBox="0 0 16 16" fill="none" stroke="#263238"><path d="M4 10.500H1.500v-9h10V5"/><path d="M1 2h11" stroke-width="2"/><path d="M4.500 6.500h10v8h-10z" fill="#fff"/><path d="M4 7h11" stroke-width="2"/></svg></div>
  <div class="h-[2px] border-t border-[#52647a] bg-[#c9dcf0]"></div>
</footer>
</body>
</html>
